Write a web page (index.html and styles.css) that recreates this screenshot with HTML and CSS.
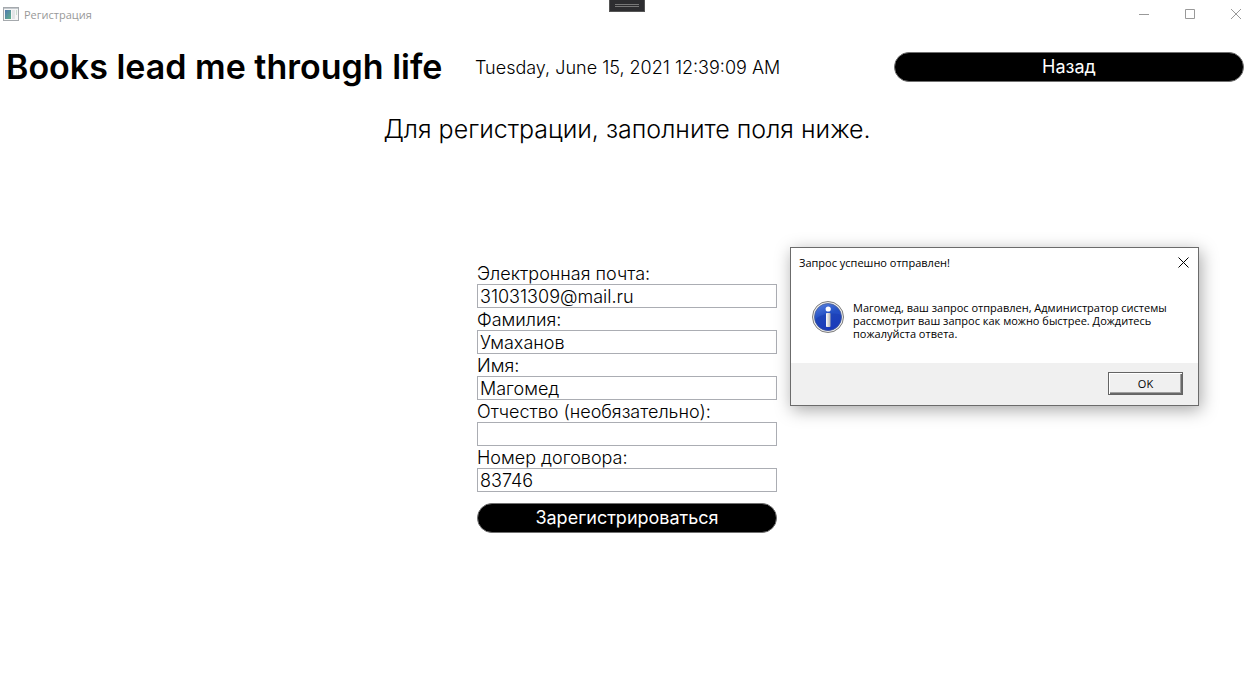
FILE: index.html
```html
<!DOCTYPE html>
<html lang="ru">
<head>
<meta charset="utf-8">
<meta name="viewport" content="width=device-width, initial-scale=1">
<title>Регистрация</title>
<link rel="stylesheet" href="styles.css">
</head>
<body>
<div class="window">
  <header class="titlebar">
    <svg class="app-icon" width="16" height="14" viewBox="0 0 16 14" aria-hidden="true">
      <defs>
        <linearGradient id="pane" x1="0" y1="0" x2="1" y2="1">
          <stop offset="0" stop-color="#4f78b0"/>
          <stop offset="1" stop-color="#5fb08a"/>
        </linearGradient>
      </defs>
      <rect x="0.5" y="0.5" width="15" height="13" fill="#f6f6f6" stroke="#a5a9ad"/>
      <rect x="1" y="1" width="14" height="1" fill="#c3c8cd"/>
      <rect x="2" y="3" width="6" height="9" fill="url(#pane)"/>
      <rect x="9" y="3" width="3" height="9" fill="#e2e4e6"/>
      <rect x="13" y="3" width="1" height="5" fill="#c9dccf"/>
    </svg>
    <span class="titlebar-text">Регистрация</span>
    <div class="caption-buttons">
      <button class="caption-button" type="button" aria-label="Свернуть">
        <svg width="10" height="10" viewBox="0 0 10 10"><path d="M0 5.500H10" /></svg>
      </button>
      <button class="caption-button" type="button" aria-label="Развернуть">
        <svg width="10" height="10" viewBox="0 0 10 10"><path d="M.5.5h9v9h-9z"/></svg>
      </button>
      <button class="caption-button" type="button" aria-label="Закрыть">
        <svg width="10" height="10" viewBox="0 0 10 10"><path d="M0 0l10 10M10 0L0 10"/></svg>
      </button>
    </div>
    <div class="debug-tab"></div>
  </header>

  <div class="topbar">
    <h1 class="brand">Books lead me through life</h1>
    <time class="clock" datetime="2021-06-15T00:39:09">Tuesday, June 15, 2021 12:39:09 AM</time>
    <button class="pill" type="button">Назад</button>
  </div>

  <main class="content">
    <h2 class="prompt">Для регистрации, заполните поля ниже.</h2>
    <form class="form">
      <label class="label" for="email">Электронная почта:</label>
      <input class="field" id="email" type="text" value="31031309@mail.ru">
      <label class="label" for="surname">Фамилия:</label>
      <input class="field" id="surname" type="text" value="Умаханов">
      <label class="label" for="name">Имя:</label>
      <input class="field" id="name" type="text" value="Магомед">
      <label class="label" for="patronymic">Отчество (необязательно):</label>
      <input class="field" id="patronymic" type="text">
      <label class="label" for="contract">Номер договора:</label>
      <input class="field" id="contract" type="text" value="83746">
      <button class="pill submit" type="button">Зарегистрироваться</button>
    </form>
  </main>

  <section class="dialog" role="dialog" aria-labelledby="dialog-title">
    <div class="dialog-head">
      <span id="dialog-title">Запрос успешно отправлен!</span>
      <button class="dialog-close" type="button" aria-label="Закрыть">
        <svg width="11" height="11" viewBox="0 0 11 11"><path d="M.5.5l10 10M10.500.5l-10 10"/></svg>
      </button>
    </div>
    <div class="dialog-body">
      <svg class="info" width="32" height="32" viewBox="0 0 32 32" aria-hidden="true">
        <defs>
          <linearGradient id="ball" x1="0" y1="0" x2="0.400" y2="1">
            <stop offset="0" stop-color="#5c86e4"/>
            <stop offset="0.500" stop-color="#2450c4"/>
            <stop offset="1" stop-color="#1f3fc8"/>
          </linearGradient>
          <linearGradient id="stem" x1="0" y1="0" x2="1" y2="0">
            <stop offset="0" stop-color="#ffffff"/>
            <stop offset="1" stop-color="#b4b4b4"/>
          </linearGradient>
        </defs>
        <circle cx="16" cy="16" r="15.500" fill="#ececec" stroke="#7c7c7c"/>
        <circle cx="16" cy="16" r="13.500" fill="url(#ball)" stroke="#4a5f96" stroke-width="0.800"/>
        <path d="M3 19C8 13 20 11 29.200 14A13.300 13.300 0 0 1 3 19z" fill="#1636a8" opacity="0.400"/>
        <circle cx="16.200" cy="8" r="2.600" fill="#fff"/>
        <rect x="14" y="12" width="4.500" height="14" rx="0.800" fill="url(#stem)"/>
      </svg>
      <p class="message">Магомед, ваш запрос отправлен, Администратор системы рассмотрит ваш запрос как можно быстрее. Дождитесь пожалуйста ответа.</p>
    </div>
    <div class="dialog-foot">
      <button class="ok" type="button">OK</button>
    </div>
  </section>
</div>
</body>
</html>
```
FILE: styles.css
```css
* { box-sizing: border-box; }

body {
  margin: 0;
  background: #fff;
  color: #000;
  font-family: Inter, "Open Sans", sans-serif;
  font-size: 18px;
}

button, input { font: inherit; color: inherit; margin: 0; }
svg { display: block; }

.window { position: relative; min-height: 100vh; }

.titlebar {
  position: relative;
  display: flex;
  align-items: center;
  height: 28px;
  padding-left: 3px;
  gap: 5px;
  color: #999;
  font: 11px/16px "Open Sans", sans-serif;
}
.titlebar-text { flex: 1; padding-top: 2px; }
.caption-buttons { display: flex; }
.caption-button {
  display: flex;
  align-items: center;
  justify-content: center;
  width: 46px;
  height: 28px;
  padding: 0 0 0 2px;
  border: 0;
  background: none;
}
.caption-button path { fill: none; stroke: #999; }

.debug-tab {
  position: absolute;
  top: 0;
  left: calc(50% - 20px);
  width: 36px;
  height: 12px;
  border: 1px solid #555;
  border-top: 0;
  background:
    linear-gradient(#777, #777) center 4px / 24px 1px no-repeat,
    linear-gradient(#777, #777) center 6px / 24px 1px no-repeat,
    #2d2d30;
}

.topbar {
  display: grid;
  grid-template-columns: 469px 1fr 350px;
  align-items: center;
  height: 78px;
  padding: 0 14px 0 6px;
}
.brand { margin: 0; font-size: 34px; line-height: 40px; font-weight: 600; white-space: nowrap; }
.clock { font-weight: 300; white-space: nowrap; }

.pill {
  height: 30px;
  padding: 0 16px;
  border: 1px solid #707070;
  border-radius: 15px;
  background: #000;
  color: #fff;
  line-height: 28px;
}

.content { padding: 8px 4px 0 0; }
.prompt {
  margin: 0;
  font-size: 25px;
  line-height: 30px;
  font-weight: 300;
  text-align: center;
}

.form {
  display: flex;
  flex-direction: column;
  width: 300px;
  margin: 118px auto 0;
}
.label { height: 22px; line-height: 24px; font-weight: 300; }
.field {
  height: 24px;
  padding: 0 2px;
  border: 1px solid #abadb3;
  border-radius: 0;
  background: #fff;
  font-weight: 300;
}
.submit { margin-top: 11px; }

.dialog {
  position: absolute;
  top: 247px;
  left: 790px;
  width: 409px;
  border: 1px solid #6b6b6b;
  background: #fff;
  box-shadow: 2px 4px 16px rgba(0, 0, 0, 0.35);
  font: 11px/13px "Open Sans", sans-serif;
}
.dialog-head {
  display: flex;
  align-items: center;
  justify-content: space-between;
  height: 28px;
  padding: 0 9px 0 8px;
}
.dialog-close { padding: 0; border: 0; background: none; }
.dialog-close path { fill: none; stroke: #000; }
.dialog-body {
  display: flex;
  gap: 9px;
  height: 87px;
  padding: 25px 24px 0 21px;
}
.info { flex: none; }
.message { margin: 0; }
.dialog-foot {
  display: flex;
  justify-content: flex-end;
  padding: 9px 15px 10px;
  background: #f0f0f0;
}
.ok {
  width: 75px;
  height: 23px;
  padding: 0;
  border: 1px solid #646464;
  background: #f0f0f0;
  line-height: 20px;
  box-shadow: inset 1px 1px #fff, inset -1px -1px #696969, inset -2px -2px #a0a0a0;
}
```
